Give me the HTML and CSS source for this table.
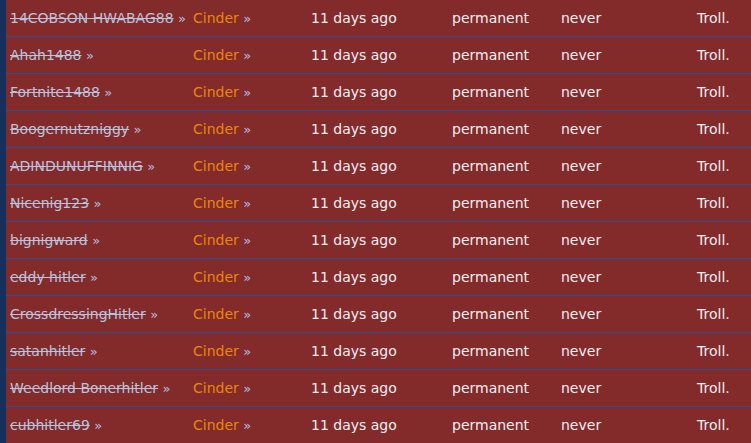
FILE: index.html
```html
<!DOCTYPE html>
<html>
<head>
<meta charset="utf-8">
<link rel="stylesheet" href="styles.css">
</head>
<body>
<div class="page">
  <div class="side"></div>
  <div class="list">
    <div class="row"><span class="c name"><s>14COBSON HWABAG88</s> <span class="arr">»</span></span><span class="c by">Cinder <span class="arr">»</span></span><span class="c date">11 days ago</span><span class="c dur">permanent</span><span class="c exp">never</span><span class="c why">Troll.</span></div>
    <div class="row"><span class="c name"><s>Ahah1488</s> <span class="arr">»</span></span><span class="c by">Cinder <span class="arr">»</span></span><span class="c date">11 days ago</span><span class="c dur">permanent</span><span class="c exp">never</span><span class="c why">Troll.</span></div>
    <div class="row"><span class="c name"><s>Fortnite1488</s> <span class="arr">»</span></span><span class="c by">Cinder <span class="arr">»</span></span><span class="c date">11 days ago</span><span class="c dur">permanent</span><span class="c exp">never</span><span class="c why">Troll.</span></div>
    <div class="row"><span class="c name"><s>Boogernutzniggy</s> <span class="arr">»</span></span><span class="c by">Cinder <span class="arr">»</span></span><span class="c date">11 days ago</span><span class="c dur">permanent</span><span class="c exp">never</span><span class="c why">Troll.</span></div>
    <div class="row"><span class="c name"><s>ADINDUNUFFINNIG</s> <span class="arr">»</span></span><span class="c by">Cinder <span class="arr">»</span></span><span class="c date">11 days ago</span><span class="c dur">permanent</span><span class="c exp">never</span><span class="c why">Troll.</span></div>
    <div class="row"><span class="c name"><s>Nicenig123</s> <span class="arr">»</span></span><span class="c by">Cinder <span class="arr">»</span></span><span class="c date">11 days ago</span><span class="c dur">permanent</span><span class="c exp">never</span><span class="c why">Troll.</span></div>
    <div class="row"><span class="c name"><s>bignigward</s> <span class="arr">»</span></span><span class="c by">Cinder <span class="arr">»</span></span><span class="c date">11 days ago</span><span class="c dur">permanent</span><span class="c exp">never</span><span class="c why">Troll.</span></div>
    <div class="row"><span class="c name"><s>eddy hitler</s> <span class="arr">»</span></span><span class="c by">Cinder <span class="arr">»</span></span><span class="c date">11 days ago</span><span class="c dur">permanent</span><span class="c exp">never</span><span class="c why">Troll.</span></div>
    <div class="row"><span class="c name"><s>CrossdressingHitler</s> <span class="arr">»</span></span><span class="c by">Cinder <span class="arr">»</span></span><span class="c date">11 days ago</span><span class="c dur">permanent</span><span class="c exp">never</span><span class="c why">Troll.</span></div>
    <div class="row"><span class="c name"><s>satanhitler</s> <span class="arr">»</span></span><span class="c by">Cinder <span class="arr">»</span></span><span class="c date">11 days ago</span><span class="c dur">permanent</span><span class="c exp">never</span><span class="c why">Troll.</span></div>
    <div class="row"><span class="c name"><s>Weedlord Bonerhitler</s> <span class="arr">»</span></span><span class="c by">Cinder <span class="arr">»</span></span><span class="c date">11 days ago</span><span class="c dur">permanent</span><span class="c exp">never</span><span class="c why">Troll.</span></div>
    <div class="row"><span class="c name"><s>cubhitler69</s> <span class="arr">»</span></span><span class="c by">Cinder <span class="arr">»</span></span><span class="c date">11 days ago</span><span class="c dur">permanent</span><span class="c exp">never</span><span class="c why">Troll.</span></div>
  </div>
</div>
</body>
</html>
```
FILE: styles.css
```css
html, body {
  margin: 0;
  padding: 0;
  background: #832a2b;
  overflow: hidden;
}
.page {
  display: flex;
  width: 751px;
  height: 443px;
  overflow: hidden;
  font-family: "DejaVu Sans", Verdana, sans-serif;
  font-size: 14px;
}
.side {
  width: 6px;
  flex: none;
  background: #15305a;
}
.list {
  flex: 1;
  display: flex;
  flex-direction: column;
}
.row {
  flex: none;
  display: grid;
  grid-template-columns: 183px 118px 141px 109px 136px 1fr;
  height: 37px;
  box-sizing: border-box;
  padding-left: 4px;
  align-items: center;
  border-bottom: 1px solid #2b4f9c;
  color: #f2eef2;
  white-space: nowrap;
  line-height: 16px;
}
.row .c {
  display: block;
}
.name {
  color: #b9c3dd;
}
.name s {
  text-decoration: line-through;
}
.arr {
  color: #b8bedf;
  font-size: 13px;
}
.by {
  color: #e8870c;
}
```
